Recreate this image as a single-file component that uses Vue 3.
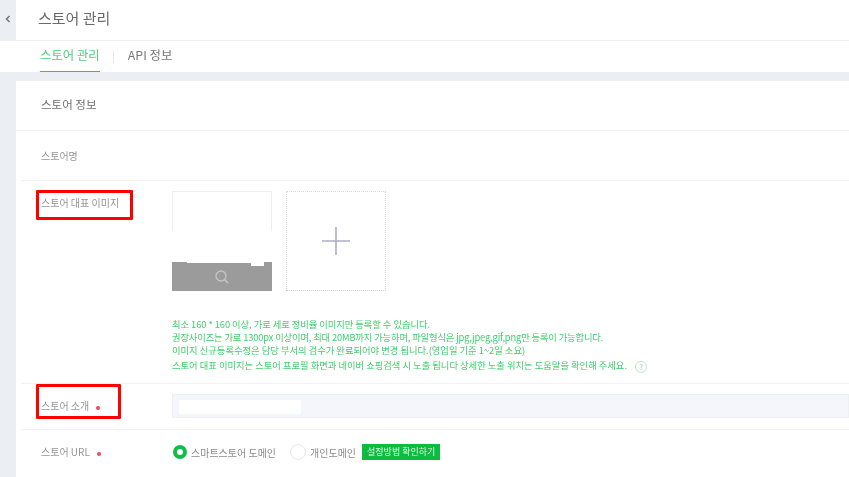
<template>
  <div class="page">
    <header class="top">
      <div class="back">
        <svg width="6" height="8" viewBox="0 0 6 8"><path d="M4.5 1 L1.5 4 L4.5 7" fill="none" stroke="#6f7682" stroke-width="1.5" /></svg>
      </div>
      <h1 class="title">스토어 관리</h1>
    </header>

    <nav class="tabs">
      <a class="tab active">스토어 관리</a>
      <span class="tab-sep"></span>
      <a class="tab">API 정보</a>
    </nav>

    <div class="body">
      <section class="card">
        <div class="card-head">스토어 정보</div>

        <div class="row row-name">
          <div class="label">스토어명</div>
        </div>

        <div class="row row-image">
          <div class="label marked">
            스토어 대표 이미지
            <span class="red-box box-image"></span>
          </div>
          <div class="field">
            <div class="thumbs">
              <div class="thumb">
                <div class="thumb-blank"></div>
                <div class="thumb-bar">
                  <span class="notch"></span>
                  <span class="notch-deep"></span>
                  <svg width="16" height="16" viewBox="0 0 16 16"><circle cx="7" cy="7" r="5" fill="none" stroke="#c4c4c4" stroke-width="1.4" /><path d="M10.6 10.6 L14 14" stroke="#c4c4c4" stroke-width="1.6" /></svg>
                </div>
              </div>
              <div class="add">
                <svg width="28" height="28" viewBox="0 0 28 28"><path d="M14 0 V28 M0 14 H28" stroke="#a9aec4" stroke-width="1.6" /></svg>
              </div>
            </div>
            <ul class="notes">
              <li class="tight-1">최소 160 * 160 이상, 가로 세로 정비율 이미지만 등록할 수 있습니다.</li>
              <li class="tight-2">권장사이즈는 가로 1300px 이상이며, 최대 20MB까지 가능하며, 파일형식은 jpg,jpeg,gif,png만 등록이 가능합니다.</li>
              <li>이미지 신규등록수정은 담당 부서의 검수가 완료되어야 변경 됩니다.(영업일 기준 1~2일 소요)</li>
              <li class="last">스토어 대표 이미지는 스토어 프로필 화면과 네이버 쇼핑검색 시 노출 됩니다 상세한 노출 위치는 도움말을 확인해 주세요. <span class="help">?</span></li>
            </ul>
          </div>
        </div>

        <div class="row row-intro">
          <div class="label marked">
            스토어 소개<i class="dot"></i>
            <span class="red-box box-intro"></span>
          </div>
          <div class="field">
            <div class="input"><div class="input-fill"></div></div>
          </div>
        </div>

        <div class="row row-url">
          <div class="label">스토어 URL<i class="dot"></i></div>
          <div class="field radios">
            <span class="radio on"></span>
            <span class="radio-text first">스마트스토어 도메인</span>
            <span class="radio"></span>
            <span class="radio-text">개인도메인</span>
            <span class="guide">설정방법 확인하기</span>
          </div>
        </div>
      </section>
    </div>
  </div>
</template>

<script setup>
</script>

<style>
html, body {
  margin: 0;
  background: #ebeef3;
  overflow: hidden;
}
</style>

<style scoped>
.page {
  width: 849px;
  height: 477px;
  overflow: hidden;
  font-family: "Noto Sans CJK KR", "Noto Sans", sans-serif;
  color: #8a8a8a;
  background: #ebeef3;
  filter: blur(0.35px);
}
.top {
  display: flex;
  height: 40px;
  background: #fff;
}
.back {
  width: 16px;
  background: #ebeef3;
  display: flex;
  align-items: center;
  justify-content: center;
  padding-bottom: 3px;
  box-sizing: border-box;
}
.title {
  margin: 0 0 0 22px;
  font-size: 15px;
  line-height: 35px;
  font-weight: 400;
  color: #6a6a6a;
}
.tabs {
  display: flex;
  align-items: center;
  height: 31px;
  margin-top: 1px;
  padding-left: 40px;
  background: #fff;
}
.tab {
  position: relative;
  font-size: 12.4px;
  line-height: 29px;
  height: 31px;
  color: #777;
  box-sizing: border-box;
}
.tab.active {
  color: #4fcf78;
  border-bottom: 1px solid #2fc563;
}
.tab-sep {
  width: 1px;
  height: 12px;
  margin: 0 14px 0 13px;
  background: #e4e6ea;
}
.body {
  padding: 9px 0 0 16px;
}
.card {
  background: #fff;
}
.card-head {
  height: 49px;
  line-height: 46px;
  padding-left: 25px;
  font-size: 11.5px;
  color: #6f6f6f;
  border-bottom: 1px solid #f1f2f5;
}
.row {
  display: flex;
  margin-left: 5px;
  border-bottom: 1px solid #f1f2f5;
}
.row-name {
  height: 49px;
}
.row-image {
  height: 202px;
}
.row-intro {
  height: 45px;
}
.row-url {
  height: 47px;
  border-bottom: 0;
}
.label {
  position: relative;
  width: 131px;
  padding-left: 20px;
  font-size: 10px;
  color: #959595;
  line-height: 50px;
  flex-shrink: 0;
}
.row-image .label {
  line-height: 14px;
  padding-top: 15px;
}
.row-intro .label {
  line-height: 43px;
}
.row-url .label {
  line-height: 44px;
}
.dot {
  display: inline-block;
  width: 4px;
  height: 4px;
  margin-left: 7px;
  border-radius: 50%;
  background: #f4465a;
  vertical-align: 0;
}
.red-box {
  position: absolute;
  left: 15px;
  border: 3px solid #f00;
  border-radius: 1px;
  box-sizing: border-box;
}
.box-image {
  top: 9px;
  width: 97px;
  height: 30px;
}
.box-intro {
  top: 0;
  width: 85px;
  height: 35px;
}
.field {
  flex: 1;
}
.thumbs {
  display: flex;
  gap: 14px;
  padding-top: 10px;
}
.thumb {
  width: 100px;
  height: 100px;
  display: flex;
  flex-direction: column;
}
.thumb-blank {
  height: 40px;
  border: 1px solid #eeeeee;
  border-bottom: 0;
  box-sizing: border-box;
}
.thumb-bar {
  position: relative;
  margin-top: 31px;
  height: 29px;
  background: #9b9b9b;
  display: flex;
  align-items: center;
  justify-content: center;
}
.notch {
  position: absolute;
  top: 0;
  left: 15px;
  width: 64px;
  height: 1px;
  background: #fff;
}
.notch-deep {
  position: absolute;
  top: 0;
  left: 79px;
  width: 13px;
  height: 4px;
  background: #fff;
}
.add {
  width: 100px;
  height: 100px;
  box-sizing: border-box;
  border: 1px dotted #d8d8dc;
  display: flex;
  align-items: center;
  justify-content: center;
}
.notes {
  list-style: none;
  margin: 27px 0 0;
  padding: 0;
  font-size: 9.3px;
  line-height: 13px;
  color: #3ecf6b;
  white-space: nowrap;
}
.tight-1 {
  letter-spacing: -0.05px;
}
.tight-2 {
  letter-spacing: -0.14px;
}
.last {
  margin-top: 2px;
}
.help {
  display: inline-block;
  width: 10px;
  height: 10px;
  margin-left: 6px;
  border: 1px solid #bfe6cb;
  border-radius: 50%;
  font-size: 8px;
  line-height: 10px;
  text-align: center;
  color: #8fd4a5;
  vertical-align: -1px;
}
.input {
  height: 24px;
  margin-top: 10px;
  background: #f5f6fb;
  border: 1px solid #eff0f4;
  box-sizing: border-box;
  padding: 5px 6px;
}
.input-fill {
  width: 122px;
  height: 14px;
  background: #fff;
}
.radios {
  display: flex;
  align-items: center;
  height: 44px;
  padding-left: 1px;
  font-size: 10px;
  color: #8a8a8a;
}
.radio {
  width: 14px;
  height: 14px;
  border-radius: 50%;
  border: 1px solid #e6e6e6;
  box-sizing: content-box;
  margin-right: 4px;
  background: #fff;
}
.radio.on {
  width: 6px;
  height: 6px;
  border: 4px solid #0fbf4a;
}
.radio-text {
  margin-right: 6px;
}
.radio-text.first {
  margin-right: 14px;
}
.guide {
  padding: 0 5px;
  height: 16px;
  line-height: 15px;
  font-size: 9px;
  color: #d9f7e1;
  background: #0dbb3f;
}
</style>
